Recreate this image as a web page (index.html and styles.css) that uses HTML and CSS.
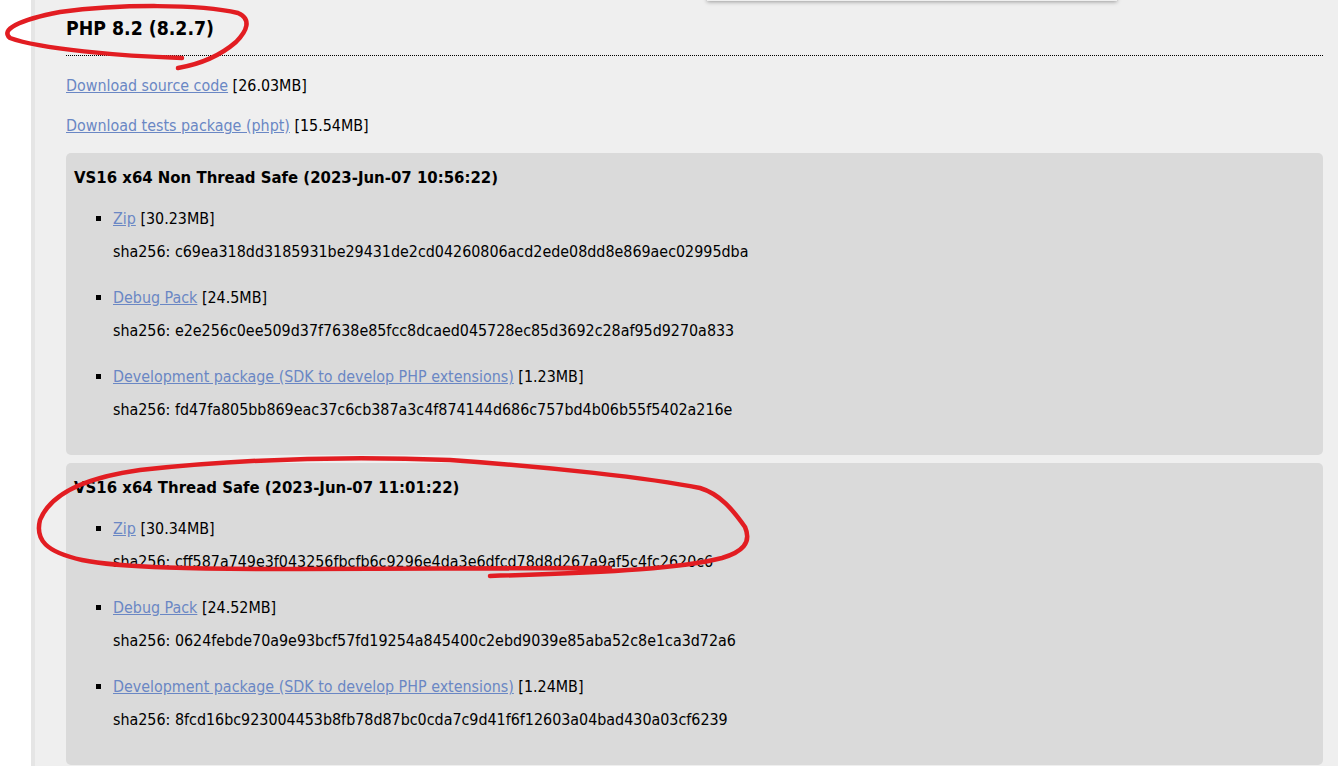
FILE: index.html
```html
<!DOCTYPE html>
<html lang="en">
<head>
<meta charset="utf-8">
<title>PHP 8.2 (8.2.7)</title>
<link rel="stylesheet" href="styles.css">
</head>
<body>
<div class="page">
  <div class="side"></div>
  <main class="main">
    <div class="menu-shadow"></div>
    <h3 class="release">PHP 8.2 (8.2.7)</h3>
    <p class="dl"><a href="#">Download source code</a> [26.03MB]</p>
    <p class="dl"><a href="#">Download tests package (phpt)</a> [15.54MB]</p>

    <div class="innerbox">
      <h4 class="build">VS16 x64 Non Thread Safe (2023-Jun-07 10:56:22)</h4>
      <ul class="files">
        <li><a href="#">Zip</a> [30.23MB]<span class="sha">sha256: c69ea318dd3185931be29431de2cd04260806acd2ede08dd8e869aec02995dba</span></li>
        <li><a href="#">Debug Pack</a> [24.5MB]<span class="sha">sha256: e2e256c0ee509d37f7638e85fcc8dcaed045728ec85d3692c28af95d9270a833</span></li>
        <li><a href="#">Development package (SDK to develop PHP extensions)</a> [1.23MB]<span class="sha">sha256: fd47fa805bb869eac37c6cb387a3c4f874144d686c757bd4b06b55f5402a216e</span></li>
      </ul>
    </div>

    <div class="innerbox">
      <h4 class="build">VS16 x64 Thread Safe (2023-Jun-07 11:01:22)</h4>
      <ul class="files">
        <li><a href="#">Zip</a> [30.34MB]<span class="sha">sha256: cff587a749e3f043256fbcfb6c9296e4da3e6dfcd78d8d267a9af5c4fc2620c6</span></li>
        <li><a href="#">Debug Pack</a> [24.52MB]<span class="sha">sha256: 0624febde70a9e93bcf57fd19254a845400c2ebd9039e85aba52c8e1ca3d72a6</span></li>
        <li><a href="#">Development package (SDK to develop PHP extensions)</a> [1.24MB]<span class="sha">sha256: 8fcd16bc923004453b8fb78d87bc0cda7c9d41f6f12603a04bad430a03cf6239</span></li>
      </ul>
    </div>
  </main>
</div>
<svg class="marks" width="1338" height="766" viewBox="0 0 1338 766" aria-hidden="true">
  <path d="M182,58 C120,56 40,49 10,38 C0,30 18,20 60,12 C120,4 200,4 238,13 C252,19 247,31 236,42 C221,55 201,64 178,68"/>
  <path d="M610,568 L300,569 C200,569 120,568 82,560 C46,552 35,540 40,520 C50,495 82,478 140,470 C250,458 350,456 450,460 C550,467 650,478 700,488 C720,494 733,510 745,527 C752,543 742,552 722,558 C682,568 620,572 490,576"/>
</svg>
</body>
</html>
```
FILE: styles.css
```css
html, body {
  margin: 0;
  padding: 0;
  height: 100%;
  overflow: hidden;
}
body {
  font-family: "DejaVu Sans Condensed", "DejaVu Sans", sans-serif;
  font-size: 15.9px;
  color: #000;
  background: #fff;
  position: relative;
}
.page {
  display: flex;
  height: 766px;
}
.side {
  width: 31px;
  flex: none;
  background: #fff;
  border-right: 4px solid #e5e5e5;
}
.main {
  flex: 1;
  background: #efefef;
  padding: 0 15px 0 31px;
  position: relative;
}
.menu-shadow {
  position: absolute;
  left: 672px;
  top: -30px;
  width: 410px;
  height: 31px;
  background: #efefef;
  box-shadow: 0 1px 4px rgba(0,0,0,0.35);
}
.release {
  margin: 0;
  padding: 16px 0 13px;
  line-height: 26px;
  font-size: 19.3px;
  font-weight: bold;
  border-bottom: 1px dotted #000;
}
.dl {
  margin: 20px 0 0;
  line-height: 20px;
}
.dl + .innerbox {
  margin-top: 17px;
}
a {
  color: #6a87c4;
  text-decoration: underline;
}
.innerbox {
  background: #dadada;
  border-radius: 5px;
  padding: 15px 8px 35px;
}
.innerbox + .innerbox {
  margin-top: 8px;
}
.build {
  margin: 0;
  font-size: 16.6px;
  font-weight: bold;
  line-height: 20px;
}
.files {
  margin: 21px 0 0;
  padding-left: 39px;
  list-style: square;
}
.files li {
  line-height: 20px;
}
.files li + li {
  margin-top: 26px;
}
.sha {
  display: block;
  margin-top: 13px;
}
.marks {
  position: absolute;
  left: 0;
  top: 0;
  pointer-events: none;
}
.marks path {
  fill: none;
  stroke: #e21d22;
  stroke-width: 4.5;
  stroke-linecap: round;
  stroke-linejoin: round;
}
```
